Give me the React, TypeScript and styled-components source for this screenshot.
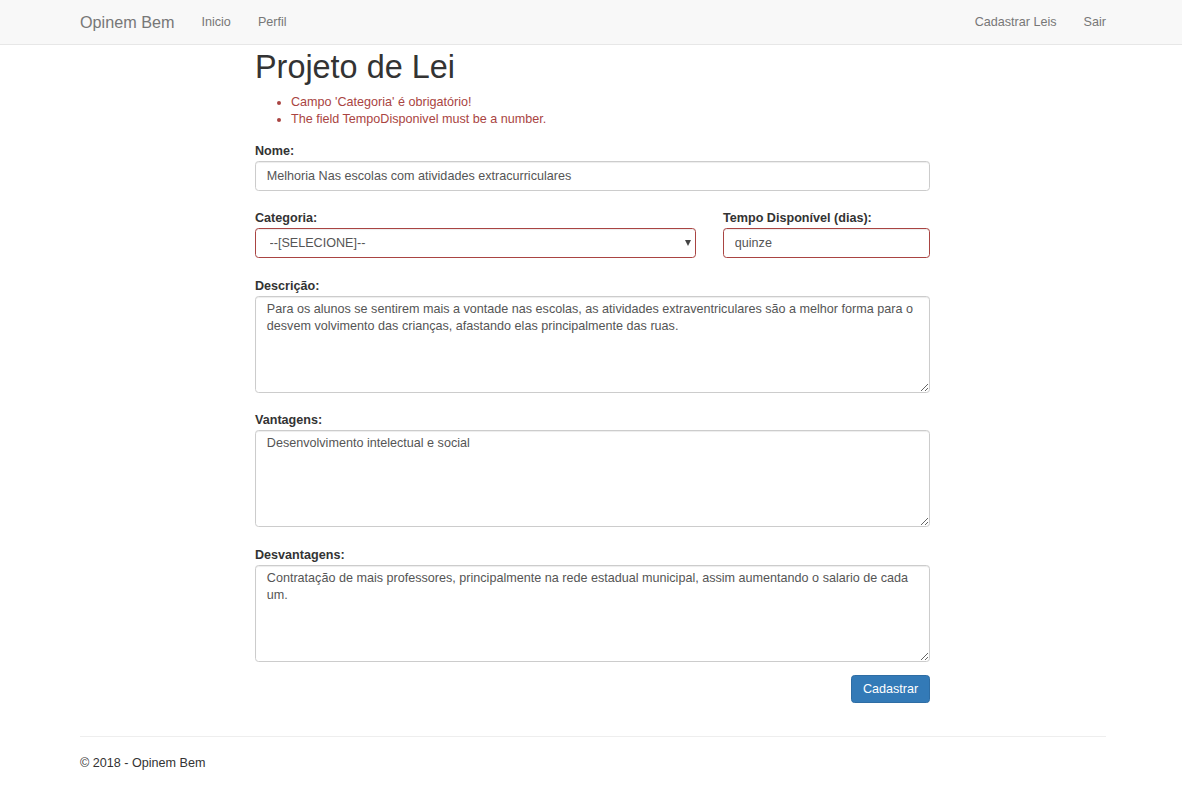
import styled, { createGlobalStyle } from 'styled-components'

const GlobalStyle = createGlobalStyle`
    body {
        margin: 0;
        background: #fff;
        color: #333;
        font-family: "Liberation Sans", Arial, sans-serif;
        font-size: 12.6px;
        line-height: 18px;
    }
    * {
        box-sizing: border-box;
    }
`;

const Navbar = styled.nav`
    height: 45px;
    background-color: #f8f8f8;
    border-bottom: 1px solid #e7e7e7;
`;

const Container = styled.div`
    width: 1026px;
    margin-left: 80px;
`;

const NavInner = styled(Container)`
    display: flex;
    align-items: center;
    height: 44px;
`;

const Brand = styled.a`
    font-size: 16.2px;
    line-height: 18px;
    color: #777;
    text-decoration: none;
    padding-right: 13.5px;
`;

const NavList = styled.ul<{ $right?: boolean }>`
    display: flex;
    list-style: none;
    margin: 0;
    padding: 0;
    margin-left: ${p => (p.$right ? 'auto' : '0')};
    margin-right: ${p => (p.$right ? '-13.5px' : '0')};
`;

const NavLink = styled.a`
    display: block;
    padding: 0 13.5px;
    color: #777;
    text-decoration: none;
    font-size: 12.6px;
    line-height: 18px;
`;

const FormColumn = styled.div`
    width: 675px;
    margin-left: 175px;
`;

const Title = styled.h1`
    margin: 5px 0 8px;
    font-size: 32.4px;
    line-height: 35.6px;
    font-weight: 500;
    color: #333;
`;

const ErrorList = styled.ul`
    margin: 0 0 14px;
    padding-left: 36px;
    color: #a94442;
    line-height: 17px;
`;

const FormGroup = styled.div`
    margin-bottom: 18.5px;
`;

const Row = styled.div`
    display: grid;
    grid-template-columns: 441px 1fr;
    column-gap: 27px;
`;

const Label = styled.label`
    display: block;
    font-weight: 700;
    line-height: 18px;
    margin-bottom: 1px;
`;

const Input = styled.input<{ $error?: boolean }>`
    display: block;
    width: 100%;
    height: 30px;
    padding: 0 10.8px;
    font-family: inherit;
    font-size: 12.6px;
    color: #555;
    background: #fff;
    border: 1px solid ${p => (p.$error ? '#a94442' : '#ccc')};
    border-radius: 3.6px;
    box-shadow: inset 0 1px 1px rgba(0, 0, 0, 0.075);
    outline: none;
`;

const SelectWrap = styled.div`
    position: relative;
`;

const Select = styled.select`
    display: block;
    width: 100%;
    height: 30px;
    padding: 0 24px 0 13.5px;
    font-family: inherit;
    font-size: 12.6px;
    color: #555;
    background: #fff;
    border: 1px solid #a94442;
    border-radius: 3.6px;
    box-shadow: inset 0 1px 1px rgba(0, 0, 0, 0.075);
    appearance: none;
    outline: none;
`;

const Caret = styled.span`
    position: absolute;
    right: 5px;
    top: 12px;
    width: 0;
    height: 0;
    border-left: 3.5px solid transparent;
    border-right: 3.5px solid transparent;
    border-top: 6px solid #444;
    pointer-events: none;
`;

const TextArea = styled.textarea`
    display: block;
    width: 100%;
    height: 97px;
    padding: 4px 10.8px;
    font-family: inherit;
    font-size: 12.6px;
    line-height: 17.5px;
    color: #555;
    background: #fff;
    border: 1px solid #ccc;
    border-radius: 3.6px;
    box-shadow: inset 0 1px 1px rgba(0, 0, 0, 0.075);
    resize: vertical;
    outline: none;
`;

const ActionRow = styled.div`
    display: flex;
    justify-content: flex-end;
    margin-top: -5px;
`;

const Button = styled.button`
    height: 28px;
    padding: 0 10.8px;
    font-family: inherit;
    font-size: 12.6px;
    color: #fff;
    background-color: #337ab7;
    border: 1px solid #2e6da4;
    border-radius: 3.6px;
    cursor: pointer;
`;

const Footer = styled.footer`
    margin-top: 33px;
    border-top: 1px solid #eee;
    padding-top: 17px;
`;

const Copy = styled.p`
    margin: 0;
    line-height: 18px;
`;

const descricao =
    'Para os alunos se sentirem mais a vontade nas escolas, as atividades extraventriculares são a melhor forma para o desvem volvimento das crianças, afastando elas principalmente das ruas.';
const vantagens = 'Desenvolvimento intelectual e social';
const desvantagens =
    'Contratação de mais professores, principalmente na rede estadual municipal, assim aumentando o salario de cada um.';

export default function App() {
    return (
        <>
            <GlobalStyle />
            <Navbar>
                <NavInner>
                    <Brand href="#">Opinem Bem</Brand>
                    <NavList>
                        <li><NavLink href="#">Inicio</NavLink></li>
                        <li><NavLink href="#">Perfil</NavLink></li>
                    </NavList>
                    <NavList $right>
                        <li><NavLink href="#">Cadastrar Leis</NavLink></li>
                        <li><NavLink href="#">Sair</NavLink></li>
                    </NavList>
                </NavInner>
            </Navbar>
            <Container>
                <FormColumn>
                    <Title>Projeto de Lei</Title>
                    <ErrorList>
                        <li>Campo 'Categoria' é obrigatório!</li>
                        <li>The field TempoDisponivel must be a number.</li>
                    </ErrorList>
                    <FormGroup>
                        <Label>Nome:</Label>
                        <Input defaultValue="Melhoria Nas escolas com atividades extracurriculares" />
                    </FormGroup>
                    <Row>
                        <FormGroup>
                            <Label>Categoria:</Label>
                            <SelectWrap>
                                <Select defaultValue="">
                                    <option value="">--[SELECIONE]--</option>
                                </Select>
                                <Caret />
                            </SelectWrap>
                        </FormGroup>
                        <FormGroup>
                            <Label>Tempo Disponível (dias):</Label>
                            <Input $error defaultValue="quinze" />
                        </FormGroup>
                    </Row>
                    <FormGroup>
                        <Label>Descrição:</Label>
                        <TextArea defaultValue={descricao} />
                    </FormGroup>
                    <FormGroup>
                        <Label>Vantagens:</Label>
                        <TextArea defaultValue={vantagens} />
                    </FormGroup>
                    <FormGroup>
                        <Label>Desvantagens:</Label>
                        <TextArea defaultValue={desvantagens} />
                    </FormGroup>
                    <ActionRow>
                        <Button type="button">Cadastrar</Button>
                    </ActionRow>
                </FormColumn>
                <Footer>
                    <Copy>© 2018 - Opinem Bem</Copy>
                </Footer>
            </Container>
        </>
    )
}
